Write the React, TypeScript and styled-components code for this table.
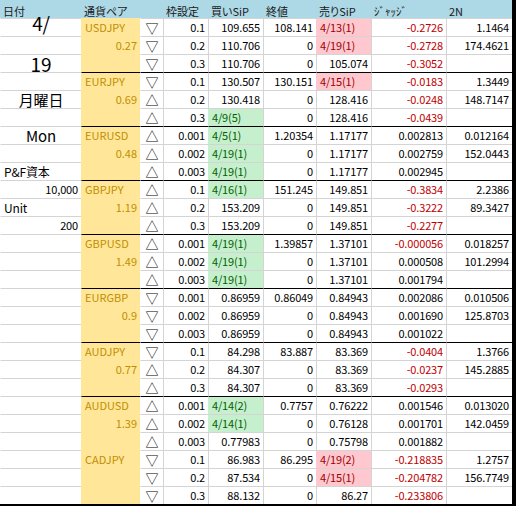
import React from 'react';
import styled, { createGlobalStyle } from 'styled-components';

const GlobalStyle = createGlobalStyle`
  html, body { margin: 0; padding: 0; background: #ffffff; }
  body { font-family: "Noto Sans CJK JP", "Noto Sans", sans-serif; }
`;

const GRID = '#d4d4d4';
const GROUP = '#000000';

type Fill = 'green' | 'pink' | undefined;
type Edge = 'none' | 'grid' | 'group';

const fills = {
  green: { bg: '#c6efce', fg: '#006100' },
  pink: { bg: '#ffc7ce', fg: '#9c0006' },
};

const Sheet = styled.div`
  width: 516px;
  height: 506px;
  box-sizing: border-box;
  border-right: 4px solid #000;
  border-bottom: 2px solid #000;
  display: grid;
  grid-template-columns: 81px 59px 23px 45px 55px 53px 55px 75px 66px;
  grid-template-rows: repeat(28, 18px);
  font-size: 11px;
  font-feature-settings: "palt";
  color: #000;
  overflow: hidden;
`;

const HeaderCell = styled.div`
  background: #add8e6;
  display: flex;
  align-items: center;
  padding: 4px 3px 0;
  line-height: 1;
  white-space: nowrap;
  color: #1a1a1a;
`;

const Cell = styled.div<{
  $align?: 'left' | 'right' | 'center';
  $bg?: string;
  $fg?: string;
  $top?: Edge;
  $left?: Edge;
}>`
  box-sizing: border-box;
  display: flex;
  align-items: center;
  justify-content: ${(p) =>
    p.$align === 'right' ? 'flex-end' : p.$align === 'center' ? 'center' : 'flex-start'};
  padding: 0 3px;
  background: ${(p) => p.$bg || '#ffffff'};
  color: ${(p) => p.$fg || '#000000'};
  border-top: 1px solid
    ${(p) => (p.$top === 'group' ? GROUP : p.$top === 'grid' ? GRID : 'transparent')};
  border-left: 1px solid ${(p) => (p.$left === 'grid' ? GRID : 'transparent')};
  line-height: 1;
  white-space: nowrap;
  letter-spacing: -0.15px;
  overflow: visible;
`;

const PairCell = styled(Cell)`
  background: #ffe699;
  color: #bf8f00;
  letter-spacing: 0;
`;

const TriCell = styled(Cell)`
  font-size: 13px;
  padding: 0;
`;

const BigText = styled.span<{ $size: number; $raise?: number }>`
  font-size: ${(p) => p.$size}px;
  line-height: 1;
  transform: translateY(${(p) => -(p.$raise || 0)}px);
`;

interface Row {
  tri: '▽' | '△';
  frame: string;
  buy: string;
  buyFill?: Fill;
  close: string;
  sell: string;
  sellFill?: Fill;
  judge: string;
  n2: string;
}

interface Group {
  pair: string;
  weight: string;
  separated: boolean;
  rows: Row[];
}

const r = (
  tri: '▽' | '△',
  frame: string,
  buy: string,
  close: string,
  sell: string,
  judge: string,
  n2: string,
  buyFill?: Fill,
  sellFill?: Fill
): Row => ({ tri, frame, buy, close, sell, judge, n2, buyFill, sellFill });

const D = '▽';
const U = '△';

const groups: Group[] = [
  {
    pair: 'USDJPY', weight: '0.27', separated: false,
    rows: [
      r(D, '0.1', '109.655', '108.141', '4/13(1)', '-0.2726', '1.1464', undefined, 'pink'),
      r(D, '0.2', '110.706', '0', '4/19(1)', '-0.2728', '174.4621', undefined, 'pink'),
      r(D, '0.3', '110.706', '0', '105.074', '-0.3052', ''),
    ],
  },
  {
    pair: 'EURJPY', weight: '0.69', separated: true,
    rows: [
      r(D, '0.1', '130.507', '130.151', '4/15(1)', '-0.0183', '1.3449', undefined, 'pink'),
      r(U, '0.2', '130.418', '0', '128.416', '-0.0248', '148.7147'),
      r(U, '0.3', '4/9(5)', '0', '128.416', '-0.0439', '', 'green'),
    ],
  },
  {
    pair: 'EURUSD', weight: '0.48', separated: true,
    rows: [
      r(U, '0.001', '4/5(1)', '1.20354', '1.17177', '0.002813', '0.012164', 'green'),
      r(U, '0.002', '4/19(1)', '0', '1.17177', '0.002759', '152.0443', 'green'),
      r(U, '0.003', '4/19(1)', '0', '1.17177', '0.002945', '', 'green'),
    ],
  },
  {
    pair: 'GBPJPY', weight: '1.19', separated: true,
    rows: [
      r(U, '0.1', '4/16(1)', '151.245', '149.851', '-0.3834', '2.2386', 'green'),
      r(U, '0.2', '153.209', '0', '149.851', '-0.3222', '89.3427'),
      r(U, '0.3', '153.209', '0', '149.851', '-0.2277', ''),
    ],
  },
  {
    pair: 'GBPUSD', weight: '1.49', separated: true,
    rows: [
      r(U, '0.001', '4/19(1)', '1.39857', '1.37101', '-0.000056', '0.018257', 'green'),
      r(U, '0.002', '4/19(1)', '0', '1.37101', '0.000508', '101.2994', 'green'),
      r(U, '0.003', '4/19(1)', '0', '1.37101', '0.001794', '', 'green'),
    ],
  },
  {
    pair: 'EURGBP', weight: '0.9', separated: true,
    rows: [
      r(D, '0.001', '0.86959', '0.86049', '0.84943', '0.002086', '0.010506'),
      r(D, '0.002', '0.86959', '0', '0.84943', '0.001690', '125.8703'),
      r(D, '0.003', '0.86959', '0', '0.84943', '0.001022', ''),
    ],
  },
  {
    pair: 'AUDJPY', weight: '0.77', separated: true,
    rows: [
      r(D, '0.1', '84.298', '83.887', '83.369', '-0.0404', '1.3766'),
      r(U, '0.2', '84.307', '0', '83.369', '-0.0237', '145.2885'),
      r(U, '0.3', '84.307', '0', '83.369', '-0.0293', ''),
    ],
  },
  {
    pair: 'AUDUSD', weight: '1.39', separated: true,
    rows: [
      r(U, '0.001', '4/14(2)', '0.7757', '0.76222', '0.001546', '0.013020', 'green'),
      r(U, '0.002', '4/14(1)', '0', '0.76128', '0.001701', '142.0459', 'green'),
      r(U, '0.003', '0.77983', '0', '0.75798', '0.001882', ''),
    ],
  },
  {
    pair: 'CADJPY', weight: '', separated: false,
    rows: [
      r(D, '0.1', '86.983', '86.295', '4/19(2)', '-0.218835', '1.2757', undefined, 'pink'),
      r(D, '0.2', '87.534', '0', '4/15(1)', '-0.204782', '156.7749', undefined, 'pink'),
      r(D, '0.3', '88.132', '0', '86.27', '-0.233806', ''),
    ],
  },
];

interface DateEntry {
  text: string;
  align: 'left' | 'right' | 'center';
  size?: number;
  raise?: number;
}

const dateColumn: DateEntry[] = [
  { text: '4/', align: 'center', size: 19, raise: 5 },
  { text: '', align: 'left' },
  { text: '19', align: 'center', size: 19 },
  { text: '', align: 'left' },
  { text: '月曜日', align: 'center', size: 15 },
  { text: '', align: 'left' },
  { text: 'Mon', align: 'center', size: 15 },
  { text: '', align: 'left' },
  { text: 'P&F資本', align: 'left', size: 12 },
  { text: '10,000', align: 'right' },
  { text: 'Unit', align: 'left', size: 12 },
  { text: '200', align: 'right' },
];

const headers = ['日付', '通貨ペア', '', '枠設定', '買いSiP', '終値', '売りSiP', 'ｼﾞｬｯｼﾞ', '2N'];

const FillCell: React.FC<{ value: string; fill: Fill; top: Edge }> = ({ value, fill, top }) => {
  if (fill) {
    return (
      <Cell $align="left" $bg={fills[fill].bg} $fg={fills[fill].fg} $top={top} $left="none">
        {value}
      </Cell>
    );
  }
  return (
    <Cell $align="right" $top={top} $left="grid">
      {value}
    </Cell>
  );
};

export default function App() {
  const cells: React.ReactNode[] = [];
  headers.forEach((h, i) => cells.push(<HeaderCell key={`h${i}`}>{h}</HeaderCell>));

  let index = 0;
  groups.forEach((g, gi) => {
    g.rows.forEach((row, ri) => {
      const top: Edge = ri === 0 && g.separated ? 'group' : 'grid';
      const d = dateColumn[index];
      cells.push(
        <Cell key={`d${index}`} $align={d ? d.align : 'left'} $top="grid" $left="none">
          {d && d.size ? (
            <BigText $size={d.size} $raise={d.raise}>
              {d.text}
            </BigText>
          ) : (
            d?.text
          )}
        </Cell>
      );
      cells.push(
        <PairCell
          key={`p${index}`}
          $align={ri === 1 ? 'right' : 'left'}
          $top={ri === 0 && g.separated ? 'group' : 'none'}
          $left="none"
          $bg="#ffe699"
          $fg="#bf8f00"
        >
          {ri === 0 ? g.pair : ri === 1 ? g.weight : ''}
        </PairCell>
      );
      cells.push(
        <TriCell key={`t${index}`} $align="center" $top={top} $left="none">
          {row.tri}
        </TriCell>
      );
      cells.push(
        <Cell key={`f${index}`} $align="right" $top={top} $left="grid">
          {row.frame}
        </Cell>
      );
      cells.push(<FillCell key={`b${index}`} value={row.buy} fill={row.buyFill} top={top} />);
      cells.push(
        <Cell key={`c${index}`} $align="right" $top={top} $left="grid">
          {row.close}
        </Cell>
      );
      cells.push(<FillCell key={`s${index}`} value={row.sell} fill={row.sellFill} top={top} />);
      cells.push(
        <Cell
          key={`j${index}`}
          $align="right"
          $top={top}
          $left="grid"
          $fg={row.judge.startsWith('-') ? '#c00000' : '#000000'}
        >
          {row.judge}
        </Cell>
      );
      cells.push(
        <Cell key={`n${index}`} $align="right" $top={top} $left="grid">
          {row.n2}
        </Cell>
      );
      index += 1;
    });
    void gi;
  });

  return (
    <>
      <GlobalStyle />
      <Sheet>{cells}</Sheet>
    </>
  );
}
